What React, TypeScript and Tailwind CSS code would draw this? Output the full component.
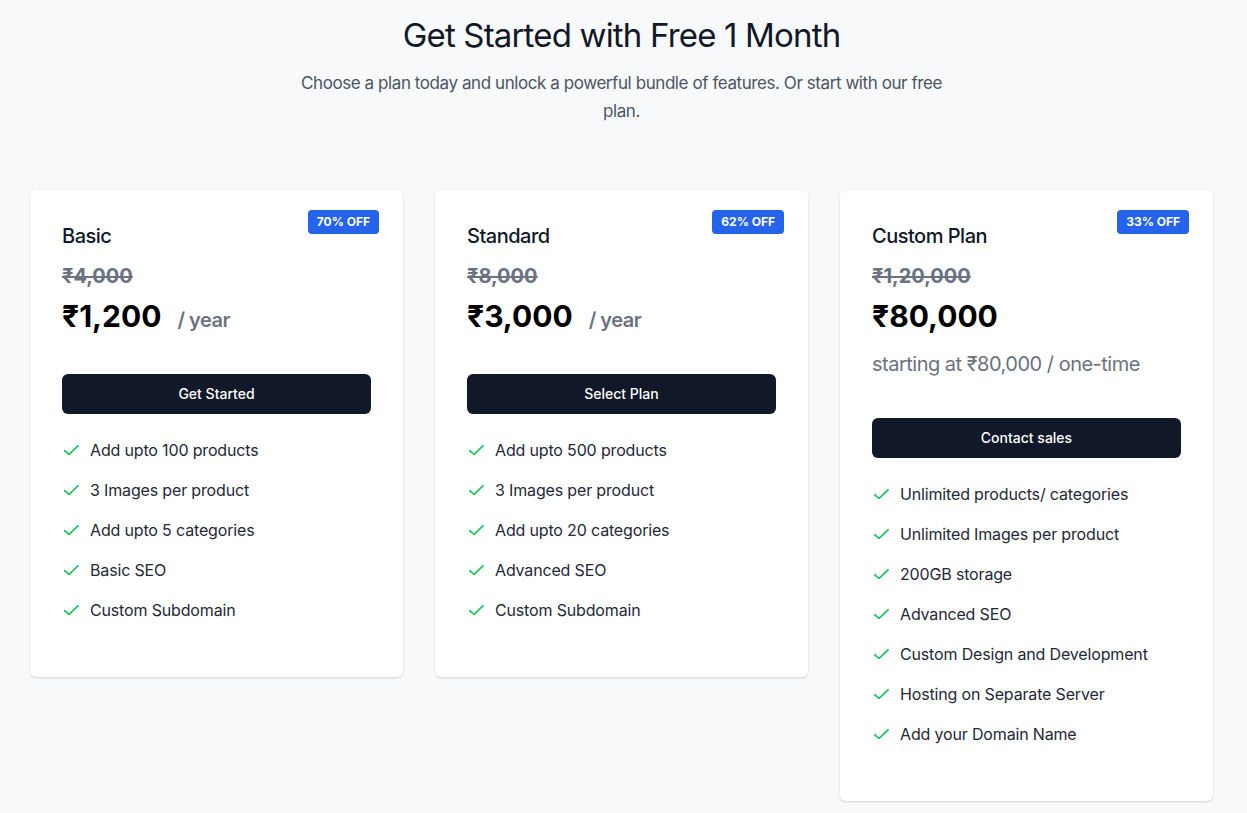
const plans = [
  {
    name: "Basic",
    badge: "70% OFF",
    was: "₹4,000",
    price: "₹1,200",
    period: "/ year",
    note: "",
    cta: "Get Started",
    features: [
      "Add upto 100 products",
      "3 Images per product",
      "Add upto 5 categories",
      "Basic SEO",
      "Custom Subdomain",
    ],
  },
  {
    name: "Standard",
    badge: "62% OFF",
    was: "₹8,000",
    price: "₹3,000",
    period: "/ year",
    note: "",
    cta: "Select Plan",
    features: [
      "Add upto 500 products",
      "3 Images per product",
      "Add upto 20 categories",
      "Advanced SEO",
      "Custom Subdomain",
    ],
  },
  {
    name: "Custom Plan",
    badge: "33% OFF",
    was: "₹1,20,000",
    price: "₹80,000",
    period: "",
    note: "starting at ₹80,000 / one-time",
    cta: "Contact sales",
    features: [
      "Unlimited products/ categories",
      "Unlimited Images per product",
      "200GB storage",
      "Advanced SEO",
      "Custom Design and Development",
      "Hosting on Separate Server",
      "Add your Domain Name",
    ],
  },
];

const CheckIcon = () => (
  <svg
    width="20"
    height="20"
    viewBox="0 0 20 20"
    fill="none"
    stroke="currentColor"
    strokeWidth="1.8"
    strokeLinecap="round"
    strokeLinejoin="round"
    className="shrink-0 text-[#22c55e]"
  >
    <path d="M2.8 10.8l4.2 3.6 9-8.6" />
  </svg>
);

const App = () => {
  return (
    <div className="min-h-screen bg-[#f8f9fb] pl-[30px] pr-[34px] pt-[15px] pb-10 font-['Inter',sans-serif]">
      <div className="text-center">
        <h1 className="text-[33px] leading-10 font-normal tracking-tight text-[#111827]">
          Get Started with Free 1 Month
        </h1>
        <p className="mx-auto mt-3.5 max-w-[660px] text-[17px] leading-7 tracking-[-0.025em] text-[#4b5563]">
          Choose a plan today and unlock a powerful bundle of features. Or start with our free plan.
        </p>
      </div>

      <div className="mt-[65px] grid grid-cols-3 items-start gap-8">
        {plans.map((plan) => (
          <div
            key={plan.name}
            className="relative rounded-md bg-white px-8 pt-8 pb-[55px] shadow-[0_1px_3px_rgba(0,0,0,0.1),0_1px_2px_rgba(0,0,0,0.06)]"
          >
            <span className="absolute right-6 top-5 rounded bg-[#2563eb] px-[9px] py-1 text-xs font-bold text-white">
              {plan.badge}
            </span>

            <h3 className="text-xl font-medium tracking-tight text-[#111827]">{plan.name}</h3>

            <p className="mt-3 text-xl font-bold text-[#6b7280] line-through">
              {plan.was}
            </p>

            <div className="mt-2 flex items-baseline">
              <span className="text-3xl font-bold text-black">{plan.price}</span>
              {plan.period && (
                <span className="ml-4 text-xl font-semibold tracking-tight text-[#6b7280]">
                  {plan.period}
                </span>
              )}
            </div>

            {plan.note && (
              <p className="mt-4 text-xl tracking-tight text-[#6b7280]">{plan.note}</p>
            )}

            <button className="mt-10 h-10 w-full rounded-md bg-[#111827] text-sm font-medium text-white">
              {plan.cta}
            </button>

            <ul className="mt-6 space-y-4">
              {plan.features.map((f) => (
                <li key={f} className="flex items-center gap-2 text-base tracking-[-0.01em] text-[#1f2937]">
                  <CheckIcon />
                  <span>{f}</span>
                </li>
              ))}
            </ul>
          </div>
        ))}
      </div>
    </div>
  );
};

export default App;
